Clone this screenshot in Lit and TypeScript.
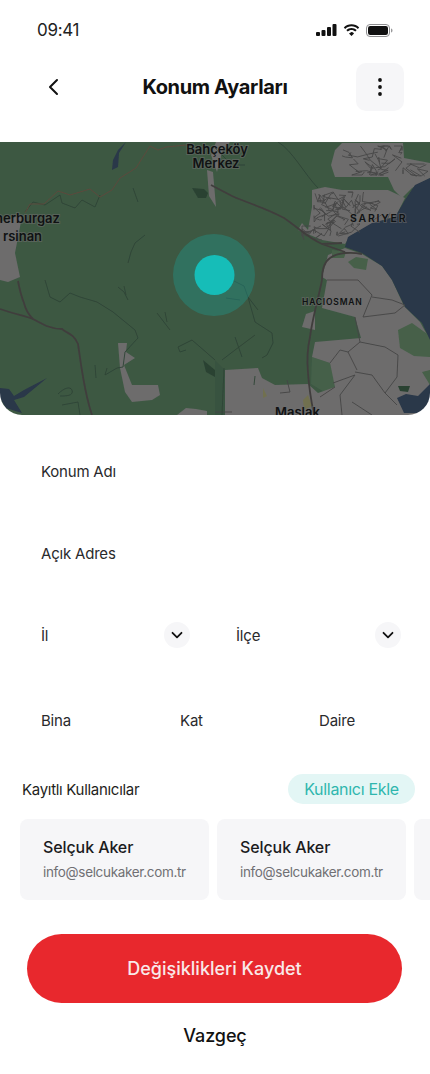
import { LitElement, html, css, svg } from "lit";
import { customElement } from "lit/decorators.js";

const grayAreas = [
  "M335 150 L342 143 L403 143 L404 158 L430 163 L430 178 L412 188 L402 198 L394 190 L388 177 L342 177 L335 177 L331 165 Z",
  "M325 187 L342 190 L388 190 L405 198 L396 216 L372 224 L350 236 L345 244 L322 240 L298 230 L302 223 L308 230 L312 207 L312 190 Z",
  "M328 255 L345 248 L362 254 L382 266 L392 280 L404 306 L420 322 L430 340 L430 415 L225 415 L225 370 L258 368 L262 378 L275 385 L308 384 L318 393 L335 387 L330 363 L312 357 L315 342 L361 338 L355 317 L322 308 L327 280 L322 277 Z",
  "M302 327 L306 314 L315 311 L315 330 Z",
  "M118 343 L127 343 L126 352 L135 358 L124 365 L132 385 L158 385 L160 395 L152 400 L132 402 L125 392 L120 368 Z",
  "M0 222 L22 215 L20 227 L15 253 L20 277 L8 282 L0 280 Z",
  "M177 415 L186 408 L196 409 L207 411 L207 415 Z",
  "M207 170 L213 172 L216 207 L209 196 Z",
  "M216 142 L230 142 L222 152 L217 172 L211 155 Z",
];
const greenPatches = [
  "M398 330 L412 323 L430 336 L430 357 L414 356 L400 348 Z",
  "M348 262 L356 257 L368 259 L366 270 L354 268 Z",
  "M332 250 L346 252 L344 258 L332 258 Z",
  "M422 372 L430 370 L430 385 Z",
];
const water = [
  "M430 178 L415 185 L405 200 L395 217 L372 223 L348 237 L345 247 L362 253 L382 266 L392 280 L405 307 L422 323 L430 340 Z",
  "M126 142 L119 153 L118 167 L112 170 L113 160 L118 150 Z",
  "M47 378 L24 390 L14 396 L9 389 L0 388 L0 398 L6 408 L22 413 L14 400 L24 397 Z",
  "M397 398 L406 394 L418 396 L430 384 L430 403 L420 413 L404 413 Z",
];
const roadsMain = [
  "M0 309 C14 314 26 316 33 319 C42 324 50 329 62 329 C68 334 74 334 78 344 C81 364 84 392 92 415",
  "M18 281 C20 292 22 298 24 303 C26 312 30 316 33 319",
  "M211 185 L232 196 C250 204 266 208 284 218 C296 226 308 238 322 244 L342 243 M322 244 L345 252",
  "M322 280 C318 300 312 320 310 337 C307 350 307 362 308 373 C309 388 311 400 314 415",
  "M322 280 C322 270 324 262 330 258 C338 252 352 252 362 254",
];
const roadsBrown = "M186 145 L166 147 L158 150 L150 146 L136 168 L120 178 L112 190 L100 197 L90 189 L70 195 L58 191 L44 204 L30 204 L25 213";
const roadsThin = [
  "M133 188 L138 202 M145 235 L135 243 L131 252 L128 263",
  "M25 212 L33 202 L45 205 L60 195 L62 203 L75 208 L82 200 L95 207 L100 195",
  "M45 280 L50 297 L60 302 L70 293 L80 297 L97 302 L113 312 L135 330 L138 338 L125 352 L123 367 L117 368 L105 375 L107 368",
  "M118 287 L124 292 L128 300 M124 286 L126 295 M157 313 L170 330 M165 312 L167 322",
  "M178 347 L192 340 L207 353 L215 360 M178 347 L180 352 L186 350",
  "M58 394 C64 388 70 386 72 390 C74 396 66 396 60 396 M62 405 L78 402 L80 415 M95 365 L96 378",
  "M248 297 L255 322 L272 333 L273 343 L267 355 L262 358 M235 337 L242 357 M222 360 L235 350 L255 335",
  "M232 280 L244 286 L248 297 L258 310 M226 298 L240 300",
  "M278 142 C292 150 305 175 318 188 M215 148 L232 165 L245 165",
  "M224 368 L222 415 M255 376 L254 385",
];
const streets = [
  "M327 280 L358 280 L372 295 L363 317 M372 297 L392 300 L405 305 M363 317 L395 313 L405 305",
  "M355 317 L360 342 L348 352 L340 350 L330 363 M348 352 L357 370 M360 342 L385 347 L398 355 L397 377 L385 393 L397 405",
  "M355 372 L372 375 L385 393 M333 383 L355 375 L340 395 L342 415",
  "M320 397 L335 387 M352 402 L372 415 M287 380 L290 392 L280 393 M215 412 L232 412",
];
const rng = (seed: number) => () => {
  seed = (seed * 16807) % 2147483647;
  return seed / 2147483647;
};
const tangle = (x0: number, x1: number, y0: number, y1: number, n: number, seed: number) => {
  const r = rng(seed);
  const out: string[] = [];
  for (let i = 0; i < n; i++) {
    let x = x0 + r() * (x1 - x0);
    let y = y0 + r() * (y1 - y0);
    let d = `M${x.toFixed(1)} ${y.toFixed(1)}`;
    for (let k = 0; k < 4; k++) {
      x = Math.min(x1, Math.max(x0, x + (r() - 0.5) * 22));
      y = Math.min(y1, Math.max(y0, y + (r() - 0.5) * 18));
      d += ` L${x.toFixed(1)} ${y.toFixed(1)}`;
    }
    out.push(d);
  }
  return out;
};
const urban = [
  ...tangle(342, 402, 146, 175, 20, 71),
  ...tangle(403, 428, 164, 176, 4, 19),
  ...tangle(314, 360, 192, 236, 30, 37),
  ...tangle(355, 392, 192, 220, 8, 53),
  ...tangle(302, 322, 226, 240, 5, 11),
];

const mapArt = svg`
  <defs><filter id="soft" x="-2%" y="-2%" width="104%" height="104%"><feGaussianBlur stdDeviation="0.4"></feGaussianBlur></filter></defs>
  <g transform="translate(0 -142)">
    <g filter="url(#soft)">
      <rect x="0" y="142" width="430" height="273" fill="#3d5843"></rect>
      <path d="M215 360 L225 370 L225 415 L215 415 Z" fill="#385340"></path>
      <path d="M312 357 L330 363 L336 387 L326 393 L311 384 Z" fill="#456049"></path>
      ${grayAreas.map((d) => svg`<path d=${d} fill="#6d6c6c"></path>`)}
      ${greenPatches.map((d) => svg`<path d=${d} fill="#466149"></path>`)}
      ${water.map((d) => svg`<path d=${d} fill="#2a3748"></path>`)}
      <path d="M192 188 L204 189 L208 193 L206 198 L198 198 Z" fill="#2b4233"></path>
      <path d="M398 386 L410 386 L408 392 L400 391 Z" fill="#2b4233"></path>
      <path d="M203 360 L215 370 L215 377 L206 372 Z" fill="#2b4233"></path>
      <path d="M303 400 L308 395 L312 406 L304 410 Z M263 388 L267 396 L263 398 Z" fill="#71704f"></path>
      ${urban.map((d) => svg`<path d=${d} fill="none" stroke="#474747" stroke-width="0.9"></path>`)}
      ${streets.map((d) => svg`<path d=${d} fill="none" stroke="#454545" stroke-width="0.9"></path>`)}
      ${roadsThin.map((d) => svg`<path d=${d} fill="none" stroke="#2e4436" stroke-width="0.9"></path>`)}
      ${roadsMain.map((d) => svg`<path d=${d} fill="none" stroke="#403e3c" stroke-width="1.8"></path>`)}
      <path d=${roadsBrown} fill="none" stroke="#5c4a3c" stroke-width="1"></path>
    </g>
    <circle cx="214" cy="275" r="41" fill="#1aa99f" opacity="0.32"></circle>
    <circle cx="214.500" cy="275" r="20" fill="#16bdb8"></circle>
    <text class="big" x="217" y="154" text-anchor="middle">Bahçeköy</text>
    <text class="big" x="216" y="168" text-anchor="middle">Merkez</text>
    <text class="big" x="-5" y="223">herburgaz</text>
    <text class="big" x="3" y="241">rsinan</text>
    <text class="big" x="275" y="417">Maslak</text>
    <text class="cap" x="350" y="222">SARIYER</text>
    <text class="sm" x="302" y="305">HACIOSMAN</text>
  </g>
`;

@customElement("app-root")
export class AppRoot extends LitElement {
  static styles = css`
    :host {
      display: block;
      width: 430px;
      height: 1074px;
      background: #fff;
      overflow: hidden;
      font-family: "Inter", "Noto Sans", sans-serif;
      color: #1c1c1e;
    }
    .status {
      height: 60px;
      display: flex;
      align-items: center;
      justify-content: space-between;
      padding: 0 37px;
      box-sizing: border-box;
    }
    .time { font-size: 17px; letter-spacing: -0.3px; color: #222; }
    .status-icons { display: flex; align-items: center; gap: 6px; }
    .status-icons svg { display: block; }
    .header {
      height: 54px;
      display: flex;
      align-items: center;
      justify-content: space-between;
      padding: 0 26px 0 41px;
      position: relative;
    }
    .back { width: 24px; height: 24px; display: block; }
    .title {
      position: absolute;
      left: 0;
      right: 0;
      text-align: center;
      font-size: 20px;
      font-weight: 700;
      letter-spacing: -0.35px;
      color: #111;
    }
    .more {
      width: 48px;
      height: 48px;
      border-radius: 10px;
      background: #f6f6f8;
      display: flex;
      align-items: center;
      justify-content: center;
    }
    .map {
      display: block;
      margin-top: 28px;
      width: 430px;
      height: 273px;
      border-radius: 0 0 22px 22px;
    }
    .map text { font-family: "Inter", sans-serif; fill: #101213; paint-order: stroke; stroke: rgba(110,110,110,0.55); stroke-width: 2px; }
    .map .big { font-size: 13px; font-weight: 600; }
    .map .cap { font-size: 10.500px; font-weight: 600; letter-spacing: 1.800px; }
    .map .sm { font-size: 8.500px; font-weight: 600; letter-spacing: 0.8px; }
    .form { padding: 15px 0 0 41px; }
    .row { display: flex; align-items: center; height: 82px; font-size: 15px; font-weight: 400; color: #2a2a2c; letter-spacing: -0.2px; }
    .row.last { height: 88px; }
    .half { flex: none; width: 149px; display: flex; align-items: center; justify-content: space-between; }
    .half.second { width: 165px; margin-left: 46px; }
    .caret { width: 26px; height: 26px; border-radius: 50%; background: #f6f6f8; display: flex; align-items: center; justify-content: center; }
    .third { flex: none; width: 139px; }
    .users-head { display: flex; align-items: center; justify-content: space-between; padding: 0 15px 0 22px; margin-top: 10px; height: 30px; }
    .users-title { font-size: 15px; letter-spacing: -0.3px; color: #1f1f21; }
    .pill { height: 30px; width: 127px; border-radius: 15px; background: #e3f6f5; color: #2fb6ae; font-size: 16px; letter-spacing: -0.3px; display: flex; align-items: center; justify-content: center; }
    .cards { display: flex; gap: 8px; margin: 15px 0 0 20px; overflow: hidden; }
    .card { flex: 0 0 189px; height: 81px; box-sizing: border-box; border-radius: 8px; background: #f6f6f8; padding: 18px 0 0 23px; }
    .name { font-size: 16px; font-weight: 500; color: #1b1b1d; line-height: 20px; letter-spacing: -0.1px; }
    .mail { font-size: 13.500px; color: #707074; line-height: 20px; margin-top: 5px; letter-spacing: -0.33px; }
    .save { margin: 34px 0 0 27px; width: 375px; height: 69px; border-radius: 35px; background: #e8282d; color: #f9e9e9; font-size: 18px; font-weight: 500; display: flex; align-items: center; justify-content: center; letter-spacing: 0; }
    .cancel { margin-top: 21px; text-align: center; font-size: 18px; font-weight: 500; color: #111; line-height: 24px; letter-spacing: -0.1px; }
  `;

  private caret() {
    return html`<span class="caret"><svg width="14" height="14" viewBox="0 0 14 14"><path d="M2.500 4.800 L7 9.300 L11.500 4.800" fill="none" stroke="#111" stroke-width="1.800" stroke-linecap="round" stroke-linejoin="round"></path></svg></span>`;
  }

  private card() {
    return html`<div class="card"><div class="name">Selçuk Aker</div><div class="mail">info@selcukaker.com.tr</div></div>`;
  }

  render() {
    return html`
      <div class="status">
        <span class="time">09:41</span>
        <div class="status-icons">
          <svg width="21" height="12" viewBox="0 0 21 12"><g fill="#111"><rect x="0" y="8" width="4" height="4" rx="1"></rect><rect x="5.500" y="6" width="4" height="6" rx="1"></rect><rect x="11" y="3" width="4" height="9" rx="1"></rect><rect x="16.500" y="0" width="4" height="12" rx="1"></rect></g></svg>
          <svg width="17" height="12" viewBox="0 0 17 12"><path d="M8.500 2.300 C11 2.300 13.200 3.300 14.800 4.900 L16.200 3.400 C14.200 1.400 11.500 0.200 8.500 0.200 C5.500 0.200 2.800 1.400 0.800 3.400 L2.200 4.900 C3.800 3.300 6 2.300 8.500 2.300 Z M8.500 6 C10 6 11.300 6.600 12.300 7.500 L13.700 6 C12.300 4.700 10.500 3.900 8.500 3.900 C6.500 3.900 4.700 4.700 3.300 6 L4.700 7.500 C5.700 6.600 7 6 8.500 6 Z M8.500 8 L6 9.500 L8.500 12 L11 9.500 C10.300 8.500 9.400 8 8.500 8 Z" fill="#111"></path></svg>
          <svg width="27" height="13" viewBox="0 0 27 13"><rect x="0.500" y="0.500" width="23" height="12" rx="3.500" fill="none" stroke="#8e8e90"></rect><rect x="2" y="2" width="20" height="9" rx="2.200" fill="#111"></rect><path d="M25 4.500 C26 4.800 26.500 5.500 26.500 6.500 C26.500 7.500 26 8.200 25 8.500 Z" fill="#9a9a9c"></path></svg>
        </div>
      </div>
      <div class="header">
        <svg class="back" viewBox="0 0 24 24"><path d="M16 5 L9 12 L16 19" fill="none" stroke="#111" stroke-width="2" stroke-linecap="round" stroke-linejoin="round"></path></svg>
        <div class="title">Konum Ayarları</div>
        <div class="more"><svg width="6" height="20" viewBox="0 0 6 20"><circle cx="3" cy="3" r="1.900" fill="#111"></circle><circle cx="3" cy="10" r="1.900" fill="#111"></circle><circle cx="3" cy="17" r="1.900" fill="#111"></circle></svg></div>
      </div>
      <svg class="map" viewBox="0 0 430 273">${mapArt}</svg>
      <div class="form">
        <div class="row">Konum Adı</div>
        <div class="row">Açık Adres</div>
        <div class="row">
          <div class="half"><span>İl</span>${this.caret()}</div>
          <div class="half second"><span>İlçe</span>${this.caret()}</div>
        </div>
        <div class="row last">
          <div class="third">Bina</div>
          <div class="third">Kat</div>
          <div class="third">Daire</div>
        </div>
      </div>
      <div class="users-head">
        <span class="users-title">Kayıtlı Kullanıcılar</span>
        <span class="pill">Kullanıcı Ekle</span>
      </div>
      <div class="cards">${this.card()}${this.card()}<div class="card"></div></div>
      <div class="save">Değişiklikleri Kaydet</div>
      <div class="cancel">Vazgeç</div>
    `;
  }
}
